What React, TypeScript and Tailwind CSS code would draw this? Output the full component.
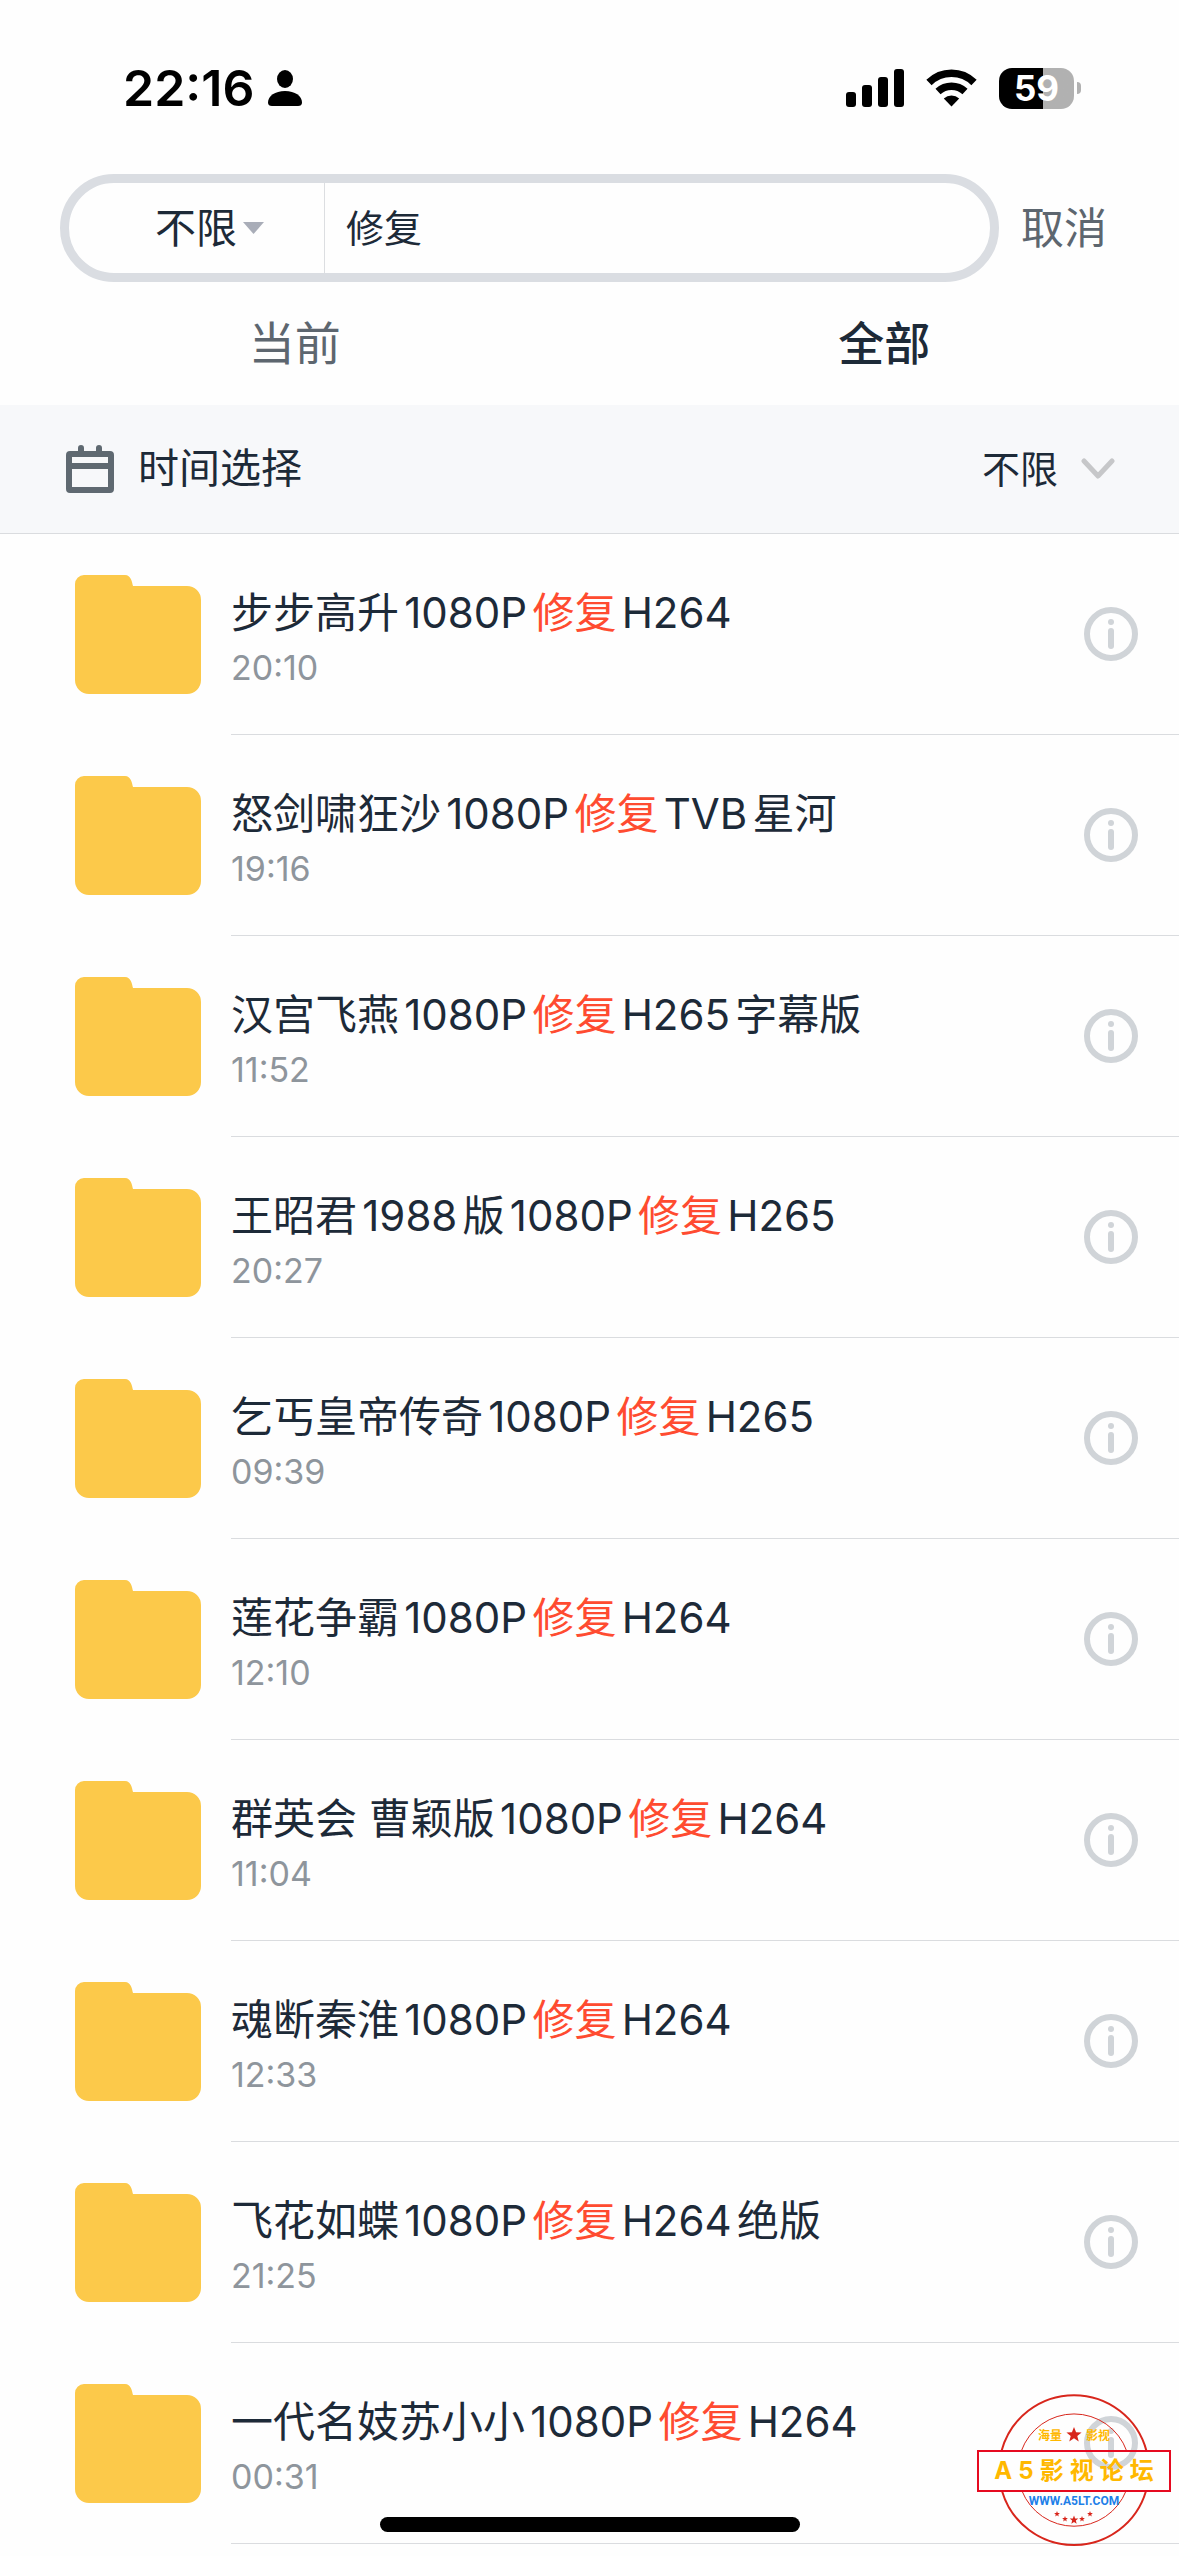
import { Fragment } from "react";

type FileItem = {
    name: string;
    time: string;
};

const KEYWORD = "修复";

const files: FileItem[] = [
    { name: "步步高升1080P修复H264", time: "20:10" },
    { name: "怒剑啸狂沙1080P修复TVB星河", time: "19:16" },
    { name: "汉宫飞燕1080P修复H265字幕版", time: "11:52" },
    { name: "王昭君1988版1080P修复H265", time: "20:27" },
    { name: "乞丐皇帝传奇1080P修复H265", time: "09:39" },
    { name: "莲花争霸1080P修复H264", time: "12:10" },
    { name: "群英会 曹颖版1080P修复H264", time: "11:04" },
    { name: "魂断秦淮1080P修复H264", time: "12:33" },
    { name: "飞花如蝶1080P修复H264绝版", time: "21:25" },
    { name: "一代名妓苏小小1080P修复H264", time: "00:31" },
];

const StatusBar = () => {
    return (
        <div className="flex h-[174px] items-center justify-between pt-[2px] pr-[98px] pl-[123px]">
            <div className="flex items-center gap-[14px]">
                <span className="text-[50px] leading-none font-semibold text-black">
                    22:16
                </span>
                <svg width="34" height="36" viewBox="0 0 34 36" fill="black">
                    <ellipse cx="17" cy="9" rx="8" ry="9" />
                    <path d="M0 32.500C0 26 7 21 17 21s17 5 17 11.500C34 35 32.500 36 30 36H4c-2.500 0-4-1-4-3.500Z" />
                </svg>
            </div>
            <div className="flex items-center gap-[22px]">
                <svg width="58" height="38" viewBox="0 0 58 38" fill="black">
                    <rect x="0" y="23" width="10" height="15" rx="3" />
                    <rect x="16" y="16" width="10" height="22" rx="3" />
                    <rect x="32" y="8" width="10" height="30" rx="3" />
                    <rect x="48" y="0" width="10" height="38" rx="3" />
                </svg>
                <svg width="51" height="38" viewBox="0 0 51 38" fill="none" stroke="black">
                    <path d="M3 13.500A32 32 0 0 1 48 13.500" strokeWidth="7.500" />
                    <path d="M12 22.500A20 20 0 0 1 39 22.500" strokeWidth="7.500" />
                    <path d="M25.500 37.500 17.800 29.500A11.500 11.500 0 0 1 33.200 29.500Z" fill="black" stroke="none" />
                </svg>
                <div className="flex items-center gap-[3px]">
                    <div className="flex h-[41px] w-[75px] items-center justify-center rounded-[13px] bg-linear-to-r from-black from-59% to-[#b1b1b1] to-59% text-[35px] leading-none font-bold text-white">
                        59
                    </div>
                    <div className="h-3 w-1 rounded-r-full bg-[#b1b1b1]" />
                </div>
            </div>
        </div>
    );
};

const SearchBar = () => {
    return (
        <div className="flex h-[108px] items-center pr-[72px] pl-[60px]">
            <div className="flex h-full min-w-0 flex-1 rounded-full border-9 border-[#dadde2]">
                <label className="flex w-[256px] items-center justify-center gap-[6px] border-r border-[#dcdee1] pl-[26px]">
                    <select
                        aria-label="类型"
                        className="appearance-none bg-transparent text-[41px] leading-none outline-none"
                    >
                        <option>不限</option>
                    </select>
                    <svg width="21" height="12" viewBox="0 0 21 12" fill="#a9adb8">
                        <path d="M0 0h21L10.500 12Z" />
                    </svg>
                </label>
                <input
                    type="text"
                    aria-label="搜索"
                    defaultValue={KEYWORD}
                    className="min-w-0 flex-1 bg-transparent pl-[21px] text-[38px] outline-none"
                />
            </div>
            <button type="button" className="ml-[22px] text-[43px] text-[#5d666f]">
                取消
            </button>
        </div>
    );
};

const Tabs = () => {
    return (
        <div className="grid h-[123px] grid-cols-2 text-[46px]">
            <button type="button" className="text-[#5d666f]">
                当前
            </button>
            <button type="button" className="font-medium">
                全部
            </button>
        </div>
    );
};

const TimeFilter = () => {
    return (
        <div className="flex h-[129px] items-center border-b border-[#dadcdf] bg-[#f7f8fa] pr-16 pl-[66px]">
            <svg width="48" height="48" viewBox="0 0 48 48" fill="none" stroke="#5f6971" strokeWidth="6">
                <rect x="3" y="9" width="42" height="36" rx="1" />
                <path d="M3 21h42" />
                <path d="M15 3v6M33 3v6" strokeLinecap="round" />
            </svg>
            <span className="ml-6 text-[41px]">时间选择</span>
            <label className="ml-auto flex items-center gap-[22px]">
                <select
                    aria-label="时间选择"
                    className="appearance-none bg-transparent text-[38px] leading-none outline-none"
                >
                    <option>不限</option>
                </select>
                <svg width="34" height="22" viewBox="0 0 34 22" fill="none" stroke="#c6c7c9" strokeWidth="5">
                    <path d="M3 3l14 15L31 3" strokeLinecap="round" strokeLinejoin="round" />
                </svg>
            </label>
        </div>
    );
};

const FolderIcon = () => {
    return (
        <svg width="126" height="119" viewBox="0 0 126 119" fill="#fcc94a" className="shrink-0">
            <path d="M0 9a9 9 0 0 1 9-9h41c6 0 7 7 8 11h54a14 14 0 0 1 14 14v80a14 14 0 0 1-14 14H14a14 14 0 0 1-14-14Z" />
        </svg>
    );
};

const FileName = ({ name }: { name: string }) => {
    const parts = name.split(KEYWORD);
    return (
        <div className="truncate text-[42px] leading-[60px] [text-autospace:normal]">
            {parts.map((part, i) => (
                <Fragment key={i}>
                    {i > 0 && <span className="text-[#ff4b30]">{KEYWORD}</span>}
                    {part}
                </Fragment>
            ))}
        </div>
    );
};

const FileRow = ({ file }: { file: FileItem }) => {
    return (
        <li className="flex items-center pl-[75px]">
            <FolderIcon />
            <div className="ml-[30px] flex h-[201px] min-w-0 flex-1 items-center border-b border-[#dadcdf] pr-[41px]">
                <div className="min-w-0 flex-1 pt-2">
                    <FileName name={file.name} />
                    <div className="text-[34px] leading-[50px] text-[#8e959c]">
                        {file.time}
                    </div>
                </div>
                <button type="button" aria-label="详情">
                    <svg width="54" height="54" viewBox="0 0 54 54" fill="none" stroke="#d0d4d8" strokeWidth="6">
                        <circle cx="27" cy="27" r="24" />
                        <path d="M27 24v15" strokeLinecap="round" />
                        <circle cx="27" cy="15" r="3" fill="#d0d4d8" stroke="none" />
                    </svg>
                </button>
            </div>
        </li>
    );
};

const STAR = "M0-10 2.600-3.300 9.500-3.100 4.100 1.300 5.900 8.100 0 4.200-5.900 8.100-4.100 1.300-9.500-3.100-2.600-3.300Z";

// Forum stamp lying over the bottom right corner of the list
const Stamp = () => {
    return (
        <div className="pointer-events-none absolute right-2 bottom-2 h-[154px] w-[194px]">
            <svg viewBox="0 0 194 154" className="h-full w-full" fill="none">
                <g stroke="#d8261c">
                    <path d="M24.500 57A75 75 0 0 1 169.500 57M25 97A75 75 0 0 0 169 97" strokeWidth="2" />
                    <path d="M44.300 57A56 56 0 0 1 149.700 57M45 97A56 56 0 0 0 149 97" />
                    <rect x="1" y="57" width="192" height="40" stroke="#e60a20" strokeWidth="2" />
                </g>
                <g fill="#d8261c">
                    <path d={STAR} transform="translate(97 41) scale(.8)" />
                    <path d={STAR} transform="translate(97 126) scale(.45)" />
                    <path d={STAR} transform="translate(88 125) scale(.3)" />
                    <path d={STAR} transform="translate(105 125) scale(.3)" />
                    <path d={STAR} transform="translate(80 120) scale(.3)" />
                    <path d={STAR} transform="translate(113 120) scale(.3)" />
                </g>
            </svg>
            <div className="absolute inset-x-0 top-[34px] flex justify-center gap-6 text-xs leading-4 font-bold text-[#ffb800]">
                <span>海量</span>
                <span>影视</span>
            </div>
            <div className="absolute inset-x-0 top-[57px] flex h-10 items-center justify-center gap-[6px] text-2xl leading-none font-bold text-[#ffb800]">
                {Array.from("A5影视论坛").map((char) => (
                    <span key={char}>{char}</span>
                ))}
            </div>
            <div className="absolute inset-x-0 top-[99px] text-center font-['Liberation_Sans_Narrow',Roboto,sans-serif] text-xs leading-4 font-bold text-[#1e80e8]">
                WWW.A5LT.COM
            </div>
        </div>
    );
};

export default function App() {
    return (
        <div className="relative min-h-screen overflow-hidden bg-[#fefefe] pb-3 font-[Inter,'Noto_Sans_CJK_SC',sans-serif] text-[#1d2a38]">
            <StatusBar />
            <SearchBar />
            <Tabs />
            <TimeFilter />
            <ul>
                {files.map((file) => (
                    <FileRow key={file.name} file={file} />
                ))}
            </ul>
            <Stamp />
            {/* Home indicator */}
            <div className="absolute bottom-6 left-1/2 h-[15px] w-[420px] -translate-x-1/2 rounded-full bg-black" />
        </div>
    );
}
